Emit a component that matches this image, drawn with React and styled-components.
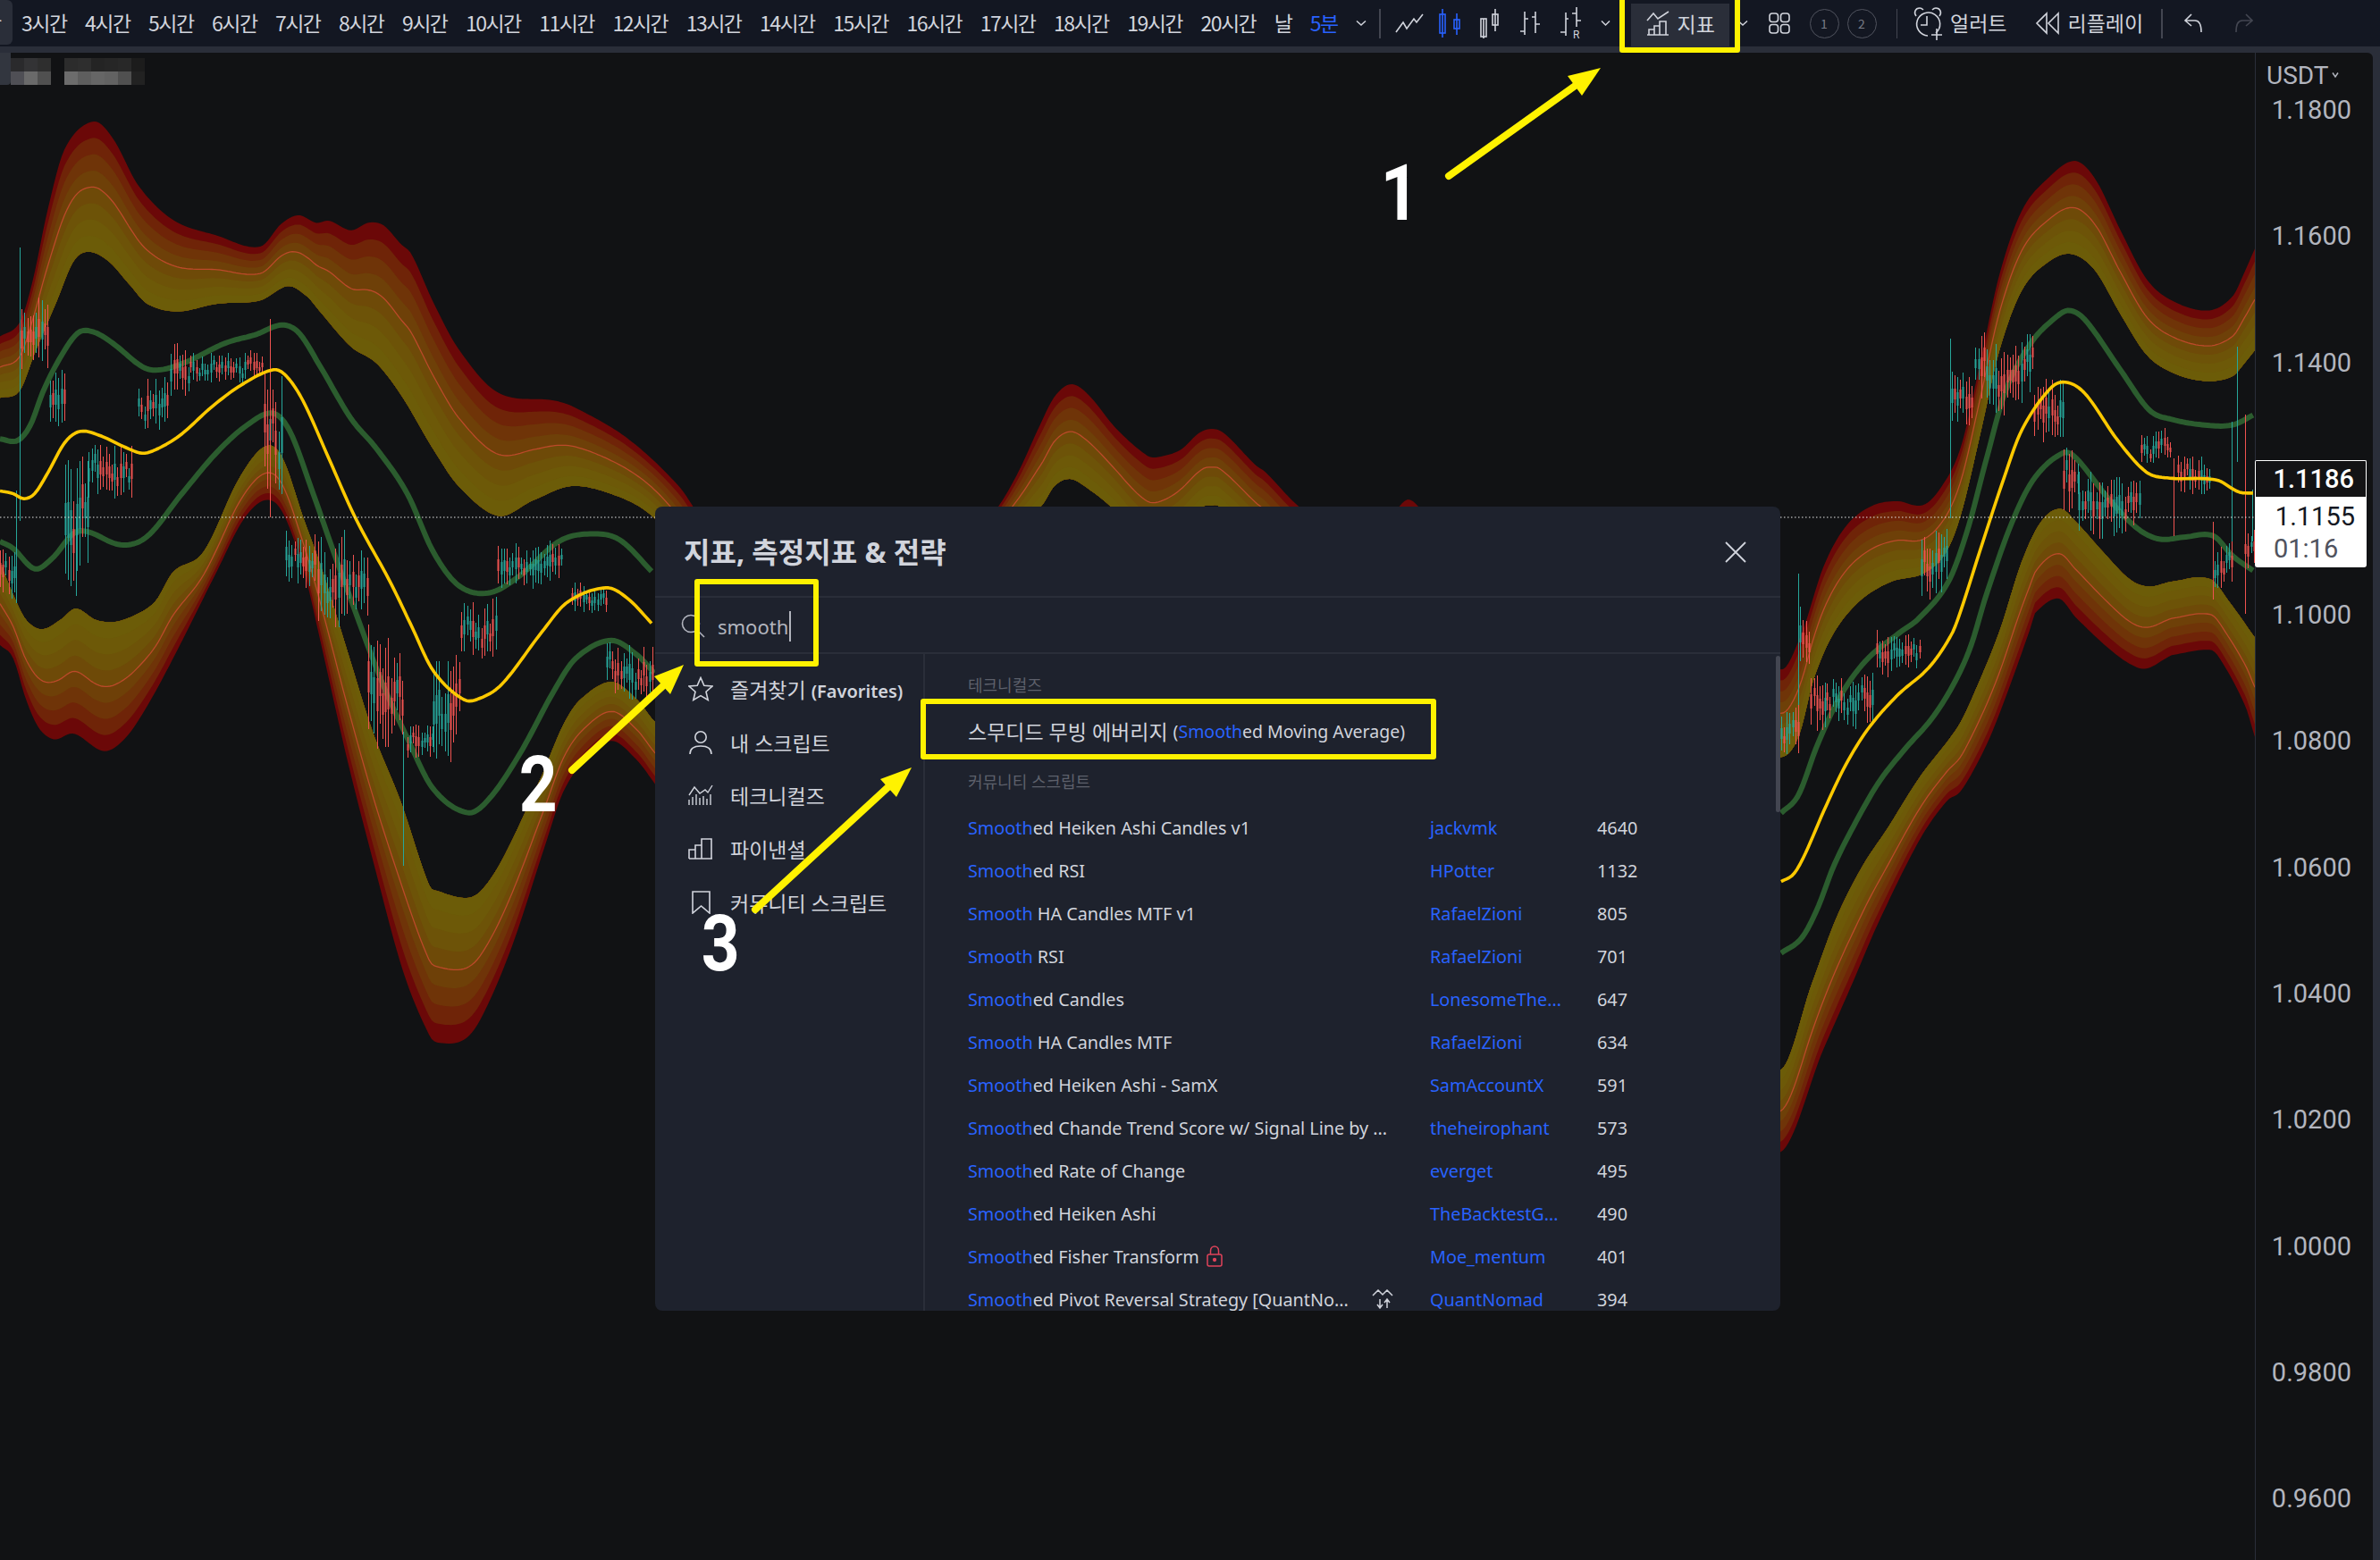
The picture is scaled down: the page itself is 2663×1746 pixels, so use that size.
import React from "react";
import styled, { createGlobalStyle } from "styled-components";

const SANS = `"Noto Sans", "Noto Sans CJK KR", sans-serif`;

const GlobalStyle = createGlobalStyle`
    html, body { margin: 0; padding: 0; background: #111214; }
    * { box-sizing: border-box; }
`;

// chart tracing: points were read off enlarged crops, so each set has its own scale and origin
const trace = (sx, sy, ox, oy) => (pts) => pts.map(([x, y]) => [ox + x / sx, oy + y / sy]);
const A = trace(2.063, 2.613, 0, 120);
const B = trace(2.063, 2.8, 0, 640);
const C = trace(2.8, 2.24, 1980, 160);
const D = trace(1.742, 3, 1100, 400);
const E = trace(2.8, 3, 1980, 700);

const sampler = (raw) => {
    const p = [...raw].sort((a, b) => a[0] - b[0]);
    const n = p.length;
    const m = p.map((_, i) => {
        const a = p[Math.max(i - 1, 0)];
        const b = p[Math.min(i + 1, n - 1)];
        return (b[1] - a[1]) / (b[0] - a[0]);
    });
    return (x) => {
        if (x <= p[0][0]) return p[0][1];
        if (x >= p[n - 1][0]) return p[n - 1][1];
        let i = 0;
        while (p[i + 1][0] < x) i++;
        const h = p[i + 1][0] - p[i][0];
        const t = (x - p[i][0]) / h;
        const t2 = t * t;
        const t3 = t2 * t;
        return (2 * t3 - 3 * t2 + 1) * p[i][1] + (t3 - 2 * t2 + t) * h * m[i] + (-2 * t3 + 3 * t2) * p[i + 1][1] + (t3 - t2) * h * m[i + 1];
    };
};

const upperOuter = sampler([
    ...A([[0, 670], [45, 630], [75, 510], [110, 300], [150, 120], [215, 42], [260, 90], [320, 230], [400, 330], [500, 375], [600, 408], [650, 340], [690, 316], [730, 338], [760, 332], [810, 360], [850, 338], [885, 345], [925, 400], [950, 430], [1000, 570], [1060, 710], [1150, 835], [1280, 858], [1330, 880], [1450, 970], [1568, 1110]]),
    [800, 600], [950, 680], [1060, 640],
    ...D([[30, 500], [70, 380], [110, 230], [140, 130], [172, 90], [205, 125], [260, 240], [320, 330], [340, 335], [385, 310], [420, 255], [445, 240], [470, 255], [530, 360], [550, 385], [615, 500]]),
    [1530, 625], [1565, 568], [1576, 559], [1588, 568], [1650, 640], [1800, 680],
    ...C([[36, 1320], [100, 1230], [170, 1060], [240, 960], [320, 910], [400, 898], [480, 908], [540, 860], [600, 760], [660, 550], [720, 330], [790, 170], [870, 90], [955, 45], [1020, 90], [1100, 220], [1180, 340], [1260, 395], [1375, 420], [1450, 385], [1490, 320], [1520, 265]]),
]);

const upperInner = sampler([
    ...A([[0, 850], [45, 830], [80, 720], [130, 570], [170, 450], [205, 423], [250, 450], [300, 520], [340, 575], [410, 597], [500, 575], [600, 565], [665, 523], [710, 555], [740, 600], [810, 700], [870, 750], [930, 850], [1000, 1000], [1060, 1110], [1150, 1195], [1230, 1150], [1320, 1108], [1420, 1135], [1500, 1190], [1568, 1290]]),
    [800, 680], [1000, 720], [1100, 620],
    ...D([[113, 500], [140, 430], [170, 408], [200, 435], [248, 500], [330, 640], [430, 500], [445, 497], [460, 500]]),
    [1500, 690], [1650, 780], [1800, 840],
    ...C([[36, 1540], [90, 1490], [140, 1340], [200, 1230], [280, 1150], [380, 1100], [480, 1080], [550, 1030], [600, 930], [660, 730], [720, 520], [790, 370], [870, 300], [945, 278], [1020, 320], [1100, 430], [1180, 530], [1260, 575], [1365, 597], [1450, 585], [1490, 550], [1520, 520]]),
]);

const lowerInner = sampler([
    ...B([[0, -30], [30, 70], [60, 150], [97, 180], [140, 150], [175, 115], [220, 150], [265, 157], [320, 130], [360, 90], [400, 0]]),
    ...A([[470, 1300], [550, 1090], [610, 993], [650, 1020], [700, 1200]]),
    ...B([[745, 0], [800, 240], [860, 500], [925, 720], [990, 980], [1010, 1000], [1075, 1022], [1110, 1000], [1160, 900], [1250, 640], [1300, 480], [1340, 400], [1412, 345], [1470, 400], [1512, 470]]),
    [900, 950], [1400, 1200], [1991, 1198],
    ...E([[135, 1195], [210, 980], [290, 810], [370, 680], [470, 510], [590, 340], [640, 230], [720, 20]]),
    ...C([[790, 1050], [850, 950], [910, 917], [960, 950], [1050, 1030], [1130, 1095], [1190, 1112], [1260, 1100], [1380, 1093], [1440, 1150], [1520, 1240]]),
]);

const lowerOuter = sampler([
    ...B([[0, 230], [30, 270], [60, 400], [90, 490], [125, 525], [170, 507], [240, 562], [290, 520], [340, 420], [400, 270], [500, 0]]),
    ...A([[560, 1210], [610, 1150], [650, 1180], [700, 1350]]),
    ...B([[740, 220], [800, 580], [860, 900], [930, 1250], [990, 1450], [1010, 1475], [1070, 1467], [1110, 1400], [1180, 1180], [1260, 850], [1300, 690], [1350, 590], [1412, 530], [1470, 590], [1512, 665]]),
    [900, 1100], [1500, 1350], [1991, 1290], [2040, 1175],
    ...E([[260, 1200], [340, 1000], [470, 720], [555, 590], [600, 555], [680, 400], [740, 240], [820, 0]]),
    ...C([[830, 1180], [905, 1142], [960, 1190]]),
    ...E([[1060, 75], [1130, 130], [1180, 145], [1250, 105], [1260, 100], [1380, 82], [1410, 110], [1490, 270], [1520, 375]]),
]);

const XS = [];
for (let x = 0; x <= 2523; x += 3) XS.push(x);

const lerpPath = (outer, inner, t) => XS.map((x) => [x, outer(x) + (inner(x) - outer(x)) * t]);
const toLine = (pts) => "M" + pts.map(([x, y]) => `${x.toFixed(1)} ${y.toFixed(1)}`).join("L");

const BAND_COLORS = ["#6b0808", "#6f2408", "#6f3408", "#6e4008", "#6e4a08", "#6d5308", "#6d5908", "#6c5c08"];

const bandLayers = (outer, inner) =>
    BAND_COLORS.map((color, i) => {
        const edge = lerpPath(outer, inner, i / 8);
        const back = lerpPath(outer, inner, 1).reverse();
        return { color, d: toLine(edge) + "L" + toLine(back).slice(1) + "Z" };
    });

const smoothLine = (pts) => {
    const f = sampler(pts);
    const sorted = pts.map((p) => p[0]).sort((a, b) => a - b);
    const out = [];
    for (let x = sorted[0]; x <= sorted[sorted.length - 1]; x += 3) out.push([x, f(x)]);
    return toLine(out);
};

const GREEN_LINES = [
    A([[0, 970], [40, 975], [70, 930], [100, 830], [140, 730], [180, 660], [215, 657], [260, 690], [330, 760], [370, 768], [430, 745], [520, 690], [590, 665], [650, 637], [690, 660], [740, 760], [810, 910], [870, 1000], [940, 1130], [1000, 1300], [1060, 1400], [1130, 1420], [1200, 1370], [1290, 1270], [1360, 1248], [1430, 1265], [1510, 1365]]),
    [...E([[36, 630], [90, 570], [150, 400], [220, 240], [300, 120], [400, 30]]), ...C([[470, 1190], [560, 1100], [620, 970], [680, 790], [740, 620], [820, 500], [900, 435], [940, 420], [990, 445], [1100, 570], [1190, 670], [1260, 693], [1360, 707], [1450, 707], [1520, 680]])],
    [...A([[0, 1270], [30, 1290], [80, 1350], [120, 1320], [180, 1240], [280, 1280], [340, 1255], [420, 1130], [500, 1010], [570, 930], [630, 895], [670, 950], [720, 1120], [770, 1300]]), ...B([[800, 50], [880, 340], [940, 520], [1000, 680], [1080, 755], [1130, 710], [1200, 570], [1280, 370], [1330, 270], [1410, 215], [1470, 260], [1512, 320]])],
    [...E([[36, 1100], [100, 1050], [150, 950], [200, 810], [260, 680], [340, 530], [420, 420], [510, 310], [580, 190], [630, 70]]), ...C([[680, 1130], [760, 950], [830, 840], [920, 777], [960, 790], [1060, 890], [1150, 965], [1220, 993], [1300, 988], [1390, 985], [1450, 1035], [1520, 1075]])],
];

const YELLOW_LINES = [
    [...A([[0, 1122], [30, 1130], [55, 1145], [80, 1130], [110, 1070], [150, 980], [185, 948], [230, 960], [290, 995], [330, 1012], [370, 995], [420, 955], [490, 875], [560, 810], [630, 768], [660, 785], [700, 860], [760, 1030], [820, 1200]]), ...B([[900, 30], [950, 170], [1000, 310], [1070, 400], [1110, 395], [1160, 350], [1250, 190], [1310, 95], [1400, 50], [1450, 85], [1510, 170]])],
    [...E([[36, 860], [75, 835], [110, 770], [175, 610], [240, 465], [310, 345], [400, 235], [500, 140], [570, 30]]), ...C([[600, 1170], [660, 1020], [730, 850], [790, 720], [880, 615], [930, 600], [990, 630], [1090, 745], [1180, 825], [1250, 840], [1400, 845], [1470, 875], [1520, 878]])],
];

const CANDLE_AREAS = [
    ...[[0, 35, 1270, 1450], [50, 110, 530, 800], [115, 150, 750, 960], [150, 205, 960, 1430], [205, 310, 960, 1170], [320, 390, 770, 970], [395, 440, 670, 860], [440, 610, 700, 820], [610, 650, 740, 1200], [660, 730, 1230, 1420], [735, 850, 1220, 1560], [1150, 1300, 1260, 1420], [1320, 1400, 1380, 1500]].map(([a, b, t, u]) => [a / 2.063, b / 2.063, 120 + t / 2.613, 120 + u / 2.613]),
    ...[[850, 930, 140, 600], [940, 1000, 450, 600], [1000, 1060, 190, 620], [1065, 1145, 60, 310], [1400, 1510, 200, 440]].map(([a, b, t, u]) => [a / 2.063, b / 2.063, 640 + t / 2.8, 640 + u / 2.8]),
    ...[[36, 90, 1400, 1568], [96, 130, 1130, 1320], [130, 180, 1310, 1500], [180, 330, 1310, 1480], [335, 470, 1215, 1350], [475, 560, 950, 1170], [570, 640, 560, 730], [645, 830, 450, 700], [830, 920, 570, 780], [920, 970, 740, 990], [970, 1160, 810, 1010], [1165, 1260, 710, 810], [1280, 1380, 770, 900], [1395, 1450, 980, 1120], [1490, 1520, 960, 1090]].map(([a, b, t, u]) => [1980 + a / 2.8, 1980 + b / 2.8, 160 + t / 2.24, 160 + u / 2.24]),
];

const SPIKES = [
    [45 / 2.063, 120 + 410 / 2.613, 120 + 1210 / 2.613, 0],
    [38 / 2.063, 120 + 1120 / 2.613, 120 + 1450 / 2.613, 0],
    [175 / 2.063, 120 + 1200 / 2.613, 120 + 1430 / 2.613, 0],
    [622 / 2.063, 120 + 620 / 2.613, 120 + 1200 / 2.613, 1],
    [930 / 2.063, 640 + 500 / 2.8, 640 + 920 / 2.8, 0],
    [1980 + 90 / 2.8, 160 + 1080 / 2.24, 160 + 1500 / 2.24, 0],
    [1980 + 565 / 2.8, 160 + 490 / 2.24, 160 + 940 / 2.24, 0],
    [1980 + 1265 / 2.8, 160 + 790 / 2.24, 160 + 985 / 2.24, 1],
    [1980 + 1388 / 2.8, 160 + 950 / 2.24, 160 + 1145 / 2.24, 1],
    [1980 + 1448 / 2.8, 160 + 700 / 2.24, 160 + 1000 / 2.24, 0],
    [1980 + 1465 / 2.8, 160 + 510 / 2.24, 160 + 800 / 2.24, 0],
    [1980 + 1490 / 2.8, 160 + 680 / 2.24, 160 + 1180 / 2.24, 1],
    [2523 - 3, 160 + 870 / 2.24, 160 + 1000 / 2.24, 0],
];

const buildCandles = () => {
    let seed = 4711;
    const rnd = () => (seed = (seed * 16807) % 2147483647) / 2147483647;
    const wicks = ["", ""];
    const bodies = ["", ""];
    CANDLE_AREAS.forEach(([x0, x1, top, bottom]) => {
        const range = bottom - top;
        let pos = rnd();
        for (let x = x0; x < x1; x += 3.2) {
            const span = range * (0.3 + rnd() * 0.45);
            pos = pos * 0.5 + rnd() * 0.5;
            const y0 = top + pos * (range - span);
            const c = rnd() > 0.5 ? 1 : 0;
            const px = Math.round(x) + 0.5;
            wicks[c] += `M${px} ${y0.toFixed(0)}V${(y0 + span).toFixed(0)}`;
            bodies[c] += `M${px} ${(y0 + span * 0.35).toFixed(0)}V${(y0 + span * 0.65).toFixed(0)}`;
        }
    });
    SPIKES.forEach(([x, y0, y1, c]) => {
        wicks[c] += `M${Math.round(x) + 0.5} ${y0.toFixed(0)}V${y1.toFixed(0)}`;
    });
    return { wicks, bodies };
};

const UPPER_BAND = bandLayers(upperOuter, upperInner);
const LOWER_BAND = bandLayers(lowerOuter, lowerInner);
const CANDLES = buildCandles();
const TEAL_RED = ["#26a69a", "#ef5350"];

const Page = styled.div`
    position: relative;
    width: 2663px;
    height: 1746px;
    overflow: hidden;
    display: flex;
    flex-direction: column;
    background: #111214;
    font-family: ${SANS};
    color: #d1d4dc;
`;

const Toolbar = styled.div`
    flex: none;
    height: 52px;
    display: flex;
    align-items: center;
    background: #131722;
    color: #d1d4dc;
    font-family: "Noto Sans CJK KR", sans-serif;
    font-size: 23px;
    white-space: nowrap;
`;
const TimeList = styled.div`
    flex: none;
    width: 1543px;
    display: flex;
    align-items: center;
    gap: 20.4px;
    overflow: hidden;
`;
const TimeItem = styled.span`
    margin-bottom: 2px;
    letter-spacing: -1.5px;
    color: ${(p) => (p.$active ? "#2962ff" : "#d1d4dc")};
    line-height: 28px;
`;
const ActiveRange = styled.span`
    flex: none;
    width: 66px;
    height: 50px;
    margin: 0 -10.4px 2px -52px;
    padding-left: 2px;
    display: flex;
    align-items: center;
    letter-spacing: -1.5px;
    background: #2a2e39;
    border-radius: 0 6px 6px 0;
`;
const Slot = styled.span`
    flex: none;
    display: inline-flex;
    align-items: center;
    margin-left: ${(p) => p.$ml || 0}px;
    color: ${(p) => p.$color || "#d1d4dc"};
`;
const ToolLabel = styled(Slot)`
    margin-bottom: 2px;
`;
const ToolSep = styled.span`
    flex: none;
    width: 1.5px;
    height: 33px;
    margin-left: ${(p) => p.$ml || 0}px;
    background: #434651;
`;
const IndicatorsButton = styled.div`
    flex: none;
    width: 110px;
    height: 49px;
    margin-left: 23px;
    margin-top: 5px;
    padding: 0 0 5px 17px;
    display: flex;
    align-items: center;
    gap: 9px;
    background: #2a2e39;
`;
const CircleMark = styled.span`
    flex: none;
    width: 33px;
    height: 33px;
    margin-left: ${(p) => p.$ml}px;
    border: 1.5px solid #50535e;
    border-radius: 50%;
    display: flex;
    align-items: center;
    justify-content: center;
    font-size: 14px;
    color: #787b86;
`;
const Strip = styled.div`
    flex: none;
    height: 7px;
    background: #2a2e39;
`;

const Main = styled.div`
    flex: 1;
    min-height: 0;
    display: flex;
    background: #2a2e39;
`;
const ChartPane = styled.div`
    position: relative;
    flex: none;
    width: 2523px;
    background: #111214;
    overflow: hidden;
`;
const ChartSvg = styled.svg`
    display: block;
`;
const LegendChip = styled.div`
    position: absolute;
    left: 0;
    top: 0;
    width: 12px;
    height: 36px;
    background: #32363f;
    border-radius: 0 0 4px 0;
`;
const Mosaic = styled.div`
    position: absolute;
    left: 12px;
    top: 6px;
    display: grid;
    grid-template-columns: repeat(10, 15px);
    grid-auto-rows: 15px;
`;
const MosaicCell = styled.i`
    background: ${(p) => p.$c};
`;

const PriceAxis = styled.div`
    position: relative;
    flex: none;
    width: 132px;
    background: #111214;
    border-left: 1.5px solid #2a2e39;
    border-top-right-radius: 6px;
    color: #b2b5be;
    font-family: Roboto, sans-serif;
    font-size: 29px;
`;
const AxisUnit = styled.div`
    height: 49px;
    padding: 1px 0 0 12px;
    display: flex;
    align-items: center;
    gap: 3px;
    font-size: 28px;
`;
const AxisTick = styled.div`
    height: 141.3px;
    line-height: 30px;
    padding-right: 24px;
    text-align: right;
`;
const LastPrice = styled.div`
    position: absolute;
    left: -1px;
    top: 456px;
    width: 125px;
    height: 41px;
    padding-right: 13px;
    text-align: right;
    line-height: 40px;
    color: #fff;
    font-weight: 500;
    background: #131315;
    border: 1.5px solid #fff;
    border-bottom: 0;
    border-radius: 2px 2px 0 0;
`;
const CountdownPrice = styled.div`
    position: absolute;
    left: -1px;
    top: 497px;
    width: 125px;
    height: 79px;
    padding: 2px 13px 0 21px;
    background: #fff;
    border-radius: 0 0 3px 3px;
    color: #131722;
    line-height: 40px;
    text-align: right;
    & > span {
        display: block;
        color: #50535e;
        text-align: left;
        line-height: 33px;
    }
`;

const Dialog = styled.div`
    position: absolute;
    left: 733px;
    top: 567px;
    width: 1259px;
    height: 900px;
    display: flex;
    flex-direction: column;
    background: #1e222d;
    border-radius: 8px;
    overflow: hidden;
`;
const DialogHead = styled.div`
    flex: none;
    height: 102px;
    padding: 0 32px;
    display: flex;
    align-items: center;
    justify-content: space-between;
    border-bottom: 2px solid #2a2e39;
`;
const DialogTitle = styled.div`
    margin-top: -2px;
    font-size: 32px;
    font-weight: 700;
    color: #d1d4dc;
`;
const SearchRow = styled.div`
    flex: none;
    height: 63px;
    padding: 2px 0 0 29px;
    display: flex;
    align-items: center;
    gap: 14px;
    border-bottom: 2px solid #2a2e39;
    font-size: 22px;
    color: #b2b5be;
`;
const Caret = styled.i`
    width: 1.5px;
    height: 34px;
    margin-left: -13px;
    background: #b2b5be;
`;
const DialogBody = styled.div`
    flex: 1;
    min-height: 0;
    position: relative;
    display: flex;
`;
const Sidebar = styled.div`
    flex: none;
    width: 302px;
    padding: 9px 0 0 37px;
    border-right: 2px solid #2a2e39;
`;
const SideItem = styled.div`
    height: 59.8px;
    display: flex;
    align-items: center;
    gap: 19px;
    font-size: 23px;
    color: #d1d4dc;
    & > svg {
        flex: none;
    }
    & > span > b {
        font-size: 20px;
        font-weight: 600;
    }
`;
const Results = styled.div`
    flex: 1;
    padding: 11px 0 0 48px;
    overflow: hidden;
`;
const GroupLabel = styled.div`
    height: 48px;
    margin-top: ${(p) => p.$mt || 0}px;
    line-height: 48px;
    font-size: 18px;
    color: #5d606b;
`;
const Feature = styled.div`
    height: 48px;
    margin-top: 3px;
    display: flex;
    align-items: center;
    gap: 6px;
    font-size: 23px;
    color: #d1d4dc;
    & > b {
        font-size: 19.5px;
        font-weight: 400;
    }
`;
const Row = styled.div`
    height: 48px;
    display: grid;
    grid-template-columns: 517px 187px auto;
    align-items: center;
    font-size: 19.8px;
    font-weight: 400;
    white-space: nowrap;
`;
const NameCell = styled.div`
    display: flex;
    align-items: center;
    gap: 8px;
`;
const Hit = styled.span`
    color: #2962ff;
`;
const Author = styled.span`
    color: #2962ff;
`;
const RowList = styled.div`
    margin-top: 3px;
`;
const ScrollThumb = styled.div`
    position: absolute;
    right: 0;
    top: 2px;
    width: 5px;
    height: 175px;
    border-radius: 3px;
    background: #434651;
`;
const CloseSlot = styled.span`
    display: inline-flex;
    margin-right: 5px;
    margin-top: 2px;
    color: #d1d4dc;
`;

const Annotations = styled.svg`
    position: absolute;
    left: 0;
    top: 0;
    pointer-events: none;
`;
const MarkBox = styled.div`
    position: absolute;
    left: ${(p) => p.$x}px;
    top: ${(p) => p.$y}px;
    width: ${(p) => p.$w}px;
    height: ${(p) => p.$h}px;
    border: 6px solid #fff200;
    border-radius: 3px;
    pointer-events: none;
`;
const StepNumber = styled.div`
    position: absolute;
    left: ${(p) => p.$x}px;
    top: ${(p) => p.$y}px;
    font-family: Roboto, sans-serif;
    font-weight: 700;
    font-size: 88px;
    line-height: 88px;
    color: #fff;
    transform: scaleX(0.85);
    pointer-events: none;
`;

const HOURS = ["3시간", "4시간", "5시간", "6시간", "7시간", "8시간", "9시간", "10시간", "11시간", "12시간", "13시간", "14시간", "15시간", "16시간", "17시간", "18시간", "19시간", "20시간"];

const RESULTS = [
    ["Smooth", "ed Heiken Ashi Candles v1", "jackvmk", "4640"],
    ["Smooth", "ed RSI", "HPotter", "1132"],
    ["Smooth", " HA Candles MTF v1", "RafaelZioni", "805"],
    ["Smooth", " RSI", "RafaelZioni", "701"],
    ["Smooth", "ed Candles", "LonesomeThe...", "647"],
    ["Smooth", " HA Candles MTF", "RafaelZioni", "634"],
    ["Smooth", "ed Heiken Ashi - SamX", "SamAccountX", "591"],
    ["Smooth", "ed Chande Trend Score w/ Signal Line by ...", "theheirophant", "573"],
    ["Smooth", "ed Rate of Change", "everget", "495"],
    ["Smooth", "ed Heiken Ashi", "TheBacktestG...", "490"],
    ["Smooth", "ed Fisher Transform", "Moe_mentum", "401", "lock"],
    ["Smooth", "ed Pivot Reversal Strategy [QuantNo...", "QuantNomad", "394", "strategy"],
];

// the 1.1200 slot stays empty: the last-price tag sits over it
const TICKS = ["1.1800", "1.1600", "1.1400", "", "1.1000", "1.0800", "1.0600", "1.0400", "1.0200", "1.0000", "0.9800", "0.9600"];

const MOSAIC = ["#2a2a2c", "#333335", "#2e2e2e", "#111214", "#2c2c2c", "#2e2e2e", "#242424", "#262626", "#282828", "#1c1c1c", "#4f4f55", "#6a6a6a", "#505050", "#111214", "#6c6c6c", "#5e5e5e", "#666666", "#626262", "#505050", "#222222"];

const Icon = ({ w, h, children, sw = 1.6 }) => (
    <svg width={w} height={h} viewBox={`0 0 ${w} ${h}`} fill="none" stroke="currentColor" strokeWidth={sw} style={{ display: "block" }}>
        {children}
    </svg>
);

const Chevron = ({ w = 11 }) => (
    <Icon w={w} h={8} sw={1.5}>
        <path d={`M1 1.5L${w / 2} 6L${w - 1} 1.5`} />
    </Icon>
);

const AlertIcon = () => (
    <Icon w={34} h={40}>
        <path d="M26 31A13 13 0 1 0 17 34" />
        <path d="M4 12C1 8 3 3 8 3C10 3 11 4 12 5" />
        <path d="M30 12C33 8 31 3 26 3C24 3 23 4 22 5" />
        <path d="M16 12V22H9" />
        <path d="M27 26V39M21 33H33" />
    </Icon>
);

const Chart = () => (
    <ChartSvg width="2523" height="1687" viewBox="0 59 2523 1687">
        {[UPPER_BAND, LOWER_BAND].map((band, b) => band.map((l, i) => <path key={`${b}-${i}`} d={l.d} fill={l.color} />))}
        <path d={toLine(lerpPath(upperOuter, upperInner, 0.5))} fill="none" stroke="#bb4a2a" strokeWidth="1.3" />
        <path d={toLine(lerpPath(lowerOuter, lowerInner, 0.5))} fill="none" stroke="#bb4a2a" strokeWidth="1.3" />
        {GREEN_LINES.map((pts, i) => (
            <path key={i} d={smoothLine(pts)} fill="none" stroke="#2b5c2e" strokeWidth="6" strokeLinejoin="round" />
        ))}
        {TEAL_RED.map((c, i) => (
            <g key={c} stroke={c} fill="none">
                <path d={CANDLES.wicks[i]} strokeWidth="1" />
                <path d={CANDLES.bodies[i]} strokeWidth="2" />
            </g>
        ))}
        {YELLOW_LINES.map((pts, i) => (
            <path key={i} d={smoothLine(pts)} fill="none" stroke="#fdc900" strokeWidth="3.6" strokeLinejoin="round" />
        ))}
        <line x1="0" x2="2523" y1="579" y2="579" stroke="#e8e8e8" strokeWidth="1.2" strokeDasharray="1.5 2.5" />
    </ChartSvg>
);

const App = () => (
    <Page>
        <GlobalStyle />
        <Toolbar>
            <TimeList>
                <ActiveRange>2시간</ActiveRange>
                {HOURS.map((h) => (
                    <TimeItem key={h}>{h}</TimeItem>
                ))}
                <TimeItem>날</TimeItem>
                <TimeItem $active>5분</TimeItem>
                <Chevron w={12} />
            </TimeList>
            <ToolSep />
            <Slot $ml={16}>
                <Icon w={32} h={24}>
                    <path d="M1 22L9 11L13 18L21 7L24 11L31 2" />
                </Icon>
            </Slot>
            <Slot $ml={17} $color="#2962ff">
                <Icon w={24} h={38}>
                    <path d="M4 3V35M20 8V32" />
                    <rect x="1" y="9" width="6" height="21" />
                    <rect x="17" y="15" width="6" height="10" />
                </Icon>
            </Slot>
            <Slot $ml={22}>
                <Icon w={22} h={34}>
                    <path d="M4 12V34M17 1V26" />
                    <rect x="1" y="12" width="6" height="20" />
                    <rect x="14" y="7" width="6" height="12" />
                </Icon>
            </Slot>
            <Slot $ml={22}>
                <Icon w={24} h={30}>
                    <path d="M6 2V28M18 2V26M1 24H6M6 10H10M18 8H14M18 16H23" />
                </Icon>
            </Slot>
            <Slot $ml={21}>
                <svg width="26" height="40" viewBox="0 0 26 40" fill="none" stroke="currentColor" strokeWidth="1.6">
                    <path d="M7 8V34M1 30H7M7 15H10M19 2V24M19 9H14M19 17H24" />
                    <text x="15" y="37" fontSize="12" fontFamily="Roboto" fill="currentColor" stroke="none">R</text>
                </svg>
            </Slot>
            <Slot $ml={20}>
                <Chevron />
            </Slot>
            <IndicatorsButton>
                <Icon w={26} h={28}>
                    <path d="M1 11L8 3L13 9L25 1" />
                    <path d="M1 27H25M3 27V21H9V27M9 27V17H15V27M15 27V12H22V27" />
                </Icon>
                <span>지표</span>
            </IndicatorsButton>
            <Slot $ml={9}>
                <Chevron w={12} />
            </Slot>
            <Slot $ml={23}>
                <Icon w={24} h={24}>
                    <rect x="1" y="1" width="9.5" height="9.5" rx="3" />
                    <rect x="13.5" y="1" width="9.5" height="9.5" rx="3" />
                    <rect x="1" y="13.5" width="9.5" height="9.5" rx="3" />
                    <rect x="13.5" y="13.5" width="9.5" height="9.5" rx="3" />
                </Icon>
            </Slot>
            <CircleMark $ml={22}>1</CircleMark>
            <CircleMark $ml={9}>2</CircleMark>
            <ToolSep $ml={22} />
            <Slot $ml={17}>
                <AlertIcon />
            </Slot>
            <ToolLabel $ml={8}>얼러트</ToolLabel>
            <Slot $ml={32}>
                <Icon w={28} h={28}>
                    <path d="M13 3L2 14L13 25ZM26 3L15 14L26 25Z" />
                </Icon>
            </Slot>
            <ToolLabel $ml={8}>리플레이</ToolLabel>
            <ToolSep $ml={20} />
            <Slot $ml={23}>
                <Icon w={22} h={24}>
                    <path d="M9 2L2 9L9 15M2 9H13C18 9 20 13 20 22" />
                </Icon>
            </Slot>
            <Slot $ml={36} $color="#434651">
                <Icon w={20} h={24}>
                    <path d="M12 2L19 9L12 15M19 9H8C3 9 1 13 1 22" />
                </Icon>
            </Slot>
        </Toolbar>
        <Strip />
        <Main>
            <ChartPane>
                <Chart />
                <LegendChip />
                <Mosaic>
                    {MOSAIC.map((c, i) => (
                        <MosaicCell key={i} $c={c} />
                    ))}
                </Mosaic>
            </ChartPane>
            <PriceAxis>
                <AxisUnit>
                    USDT
                    <Chevron w={8} />
                </AxisUnit>
                {TICKS.map((t, i) => (
                    <AxisTick key={i}>{t}</AxisTick>
                ))}
                <LastPrice>1.1186</LastPrice>
                <CountdownPrice>
                    1.1155
                    <span>01:16</span>
                </CountdownPrice>
            </PriceAxis>
        </Main>

        <Dialog>
            <DialogHead>
                <DialogTitle>지표, 측정지표 &amp; 전략</DialogTitle>
                <CloseSlot>
                    <Icon w={26} h={26} sw={1.8}>
                        <path d="M2 2L24 24M24 2L2 24" />
                    </Icon>
                </CloseSlot>
            </DialogHead>
            <SearchRow>
                <Icon w={27} h={27}>
                    <circle cx="11" cy="11" r="9.5" />
                    <path d="M18 18L26 26" />
                </Icon>
                <span>smooth</span>
                <Caret />
            </SearchRow>
            <DialogBody>
                <Sidebar>
                    <SideItem>
                        <Icon w={28} h={28}>
                            <path d="M14 1.5L17.8 10.2L27 11L20 17.2L22.2 26.5L14 21.6L5.8 26.5L8 17.2L1 11L10.2 10.2Z" />
                        </Icon>
                        <span>
                            즐겨찾기 <b>(Favorites)</b>
                        </span>
                    </SideItem>
                    <SideItem>
                        <Icon w={28} h={28}>
                            <circle cx="14" cy="8" r="6.2" />
                            <path d="M2 27C2 20 7 18 14 18C21 18 26 20 26 27" />
                        </Icon>
                        <span>내 스크립트</span>
                    </SideItem>
                    <SideItem>
                        <Icon w={28} h={24} sw={1.4}>
                            <path d="M1 12L7 3L13 10L19 6L22 9L27 1" />
                            <path d="M1 23V17M5 23V14M9 23V11M13 23V15M17 23V13M21 23V16M25 23V11" />
                        </Icon>
                        <span>테크니컬즈</span>
                    </SideItem>
                    <SideItem>
                        <Icon w={28} h={24}>
                            <path d="M1 23H27M1 23V13H8V23M8 23V8H15V23M15 23V1H26V23" />
                        </Icon>
                        <span>파이낸셜</span>
                    </SideItem>
                    <SideItem>
                        <Icon w={28} h={26}>
                            <path d="M5 1H24V25L14.5 17L5 25Z" />
                        </Icon>
                        <span>커뮤니티 스크립트</span>
                    </SideItem>
                </Sidebar>
                <Results>
                    <GroupLabel>테크니컬즈</GroupLabel>
                    <Feature>
                        스무디드 무빙 에버리지
                        <b>
                            (<Hit>Smooth</Hit>ed Moving Average)
                        </b>
                    </Feature>
                    <GroupLabel $mt={9}>커뮤니티 스크립트</GroupLabel>
                    <RowList>
                        {RESULTS.map(([hit, rest, author, count, badge]) => (
                            <Row key={hit + rest}>
                                <NameCell>
                                    <span>
                                        <Hit>{hit}</Hit>
                                        {rest}
                                    </span>
                                    {badge === "lock" && (
                                        <Slot $color="#e0435a">
                                            <Icon w={18} h={24} sw={1.5}>
                                                <rect x="1" y="10" width="16" height="13" rx="2" />
                                                <path d="M4.5 10V6C4.5 3 6.5 1 9 1C11.5 1 13.5 3 13.5 6V10" />
                                                <circle cx="9" cy="16" r="1.4" fill="currentColor" />
                                            </Icon>
                                        </Slot>
                                    )}
                                    {badge === "strategy" && (
                                        <Slot $ml={18}>
                                            <Icon w={24} h={22} sw={1.5}>
                                                <path d="M1 7L7 1L12 6L17 1L23 7" />
                                                <path d="M9 11V21M6 17L9 21L12 17M17 21V11M14 15L17 11L20 15" />
                                            </Icon>
                                        </Slot>
                                    )}
                                </NameCell>
                                <Author>{author}</Author>
                                <span>{count}</span>
                            </Row>
                        ))}
                    </RowList>
                </Results>
                <ScrollThumb />
            </DialogBody>
        </Dialog>

        <MarkBox $x={1812} $y={-6} $w={135} $h={65} />
        <MarkBox $x={777} $y={648} $w={139} $h={98} />
        <MarkBox $x={1030} $y={782} $w={577} $h={68} />

        <Annotations width="2663" height="1746" viewBox="0 0 2663 1746">
            <g stroke="#fff200" strokeWidth="8" strokeLinecap="round" fill="none">
                <path d="M1621 197L1768 92" />
                <path d="M640 862L748 762" />
                <path d="M845 1018L998 877" />
            </g>
            <g fill="#fff200">
                <path d="M1791 76L1754 85L1770 107Z" />
                <path d="M765 744L732 757L750 777Z" />
                <path d="M1020 859L985 872L1003 892Z" />
            </g>
        </Annotations>
        <StepNumber $x={1541} $y={172}>1</StepNumber>
        <StepNumber $x={577} $y={834}>2</StepNumber>
        <StepNumber $x={781} $y={1012}>3</StepNumber>
    </Page>
);

export default App;
